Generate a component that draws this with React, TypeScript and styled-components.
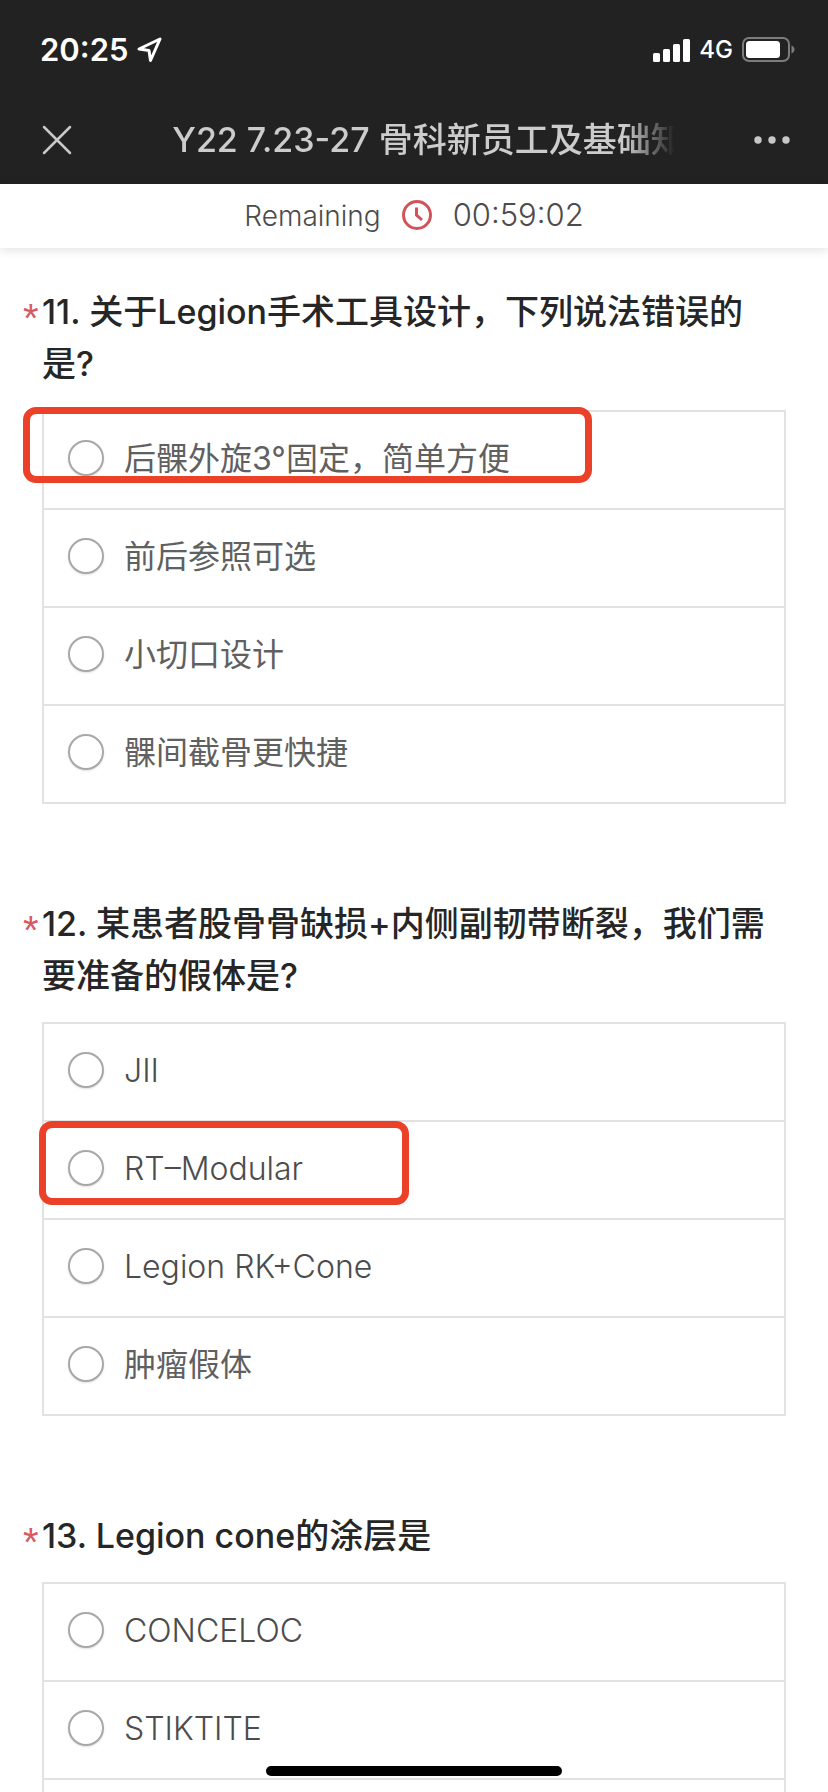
import React, { useState } from "react";
import styled, { createGlobalStyle } from "styled-components";

const GlobalStyle = createGlobalStyle`
  *, *::before, *::after { box-sizing: border-box; }
  body {
    margin: 0;
    background: #fff;
    font-family: Inter, "Noto Sans CJK SC", sans-serif;
  }
`;

const Page = styled.div`
  display: flex;
  flex-direction: column;
  height: 100vh;
  overflow: hidden;
`;

const TopArea = styled.header`
  flex: none;
  background: #222;
`;

const StatusBar = styled.div`
  display: flex;
  align-items: center;
  justify-content: space-between;
  height: 96px;
  padding: 4px 33px 0 40px;
  color: #fff;
`;

const StatusGroup = styled.div`
  display: flex;
  align-items: center;
  gap: 9px;
`;

const StatusTime = styled.span`
  font-size: 31px;
  font-weight: 600;
  line-height: 40px;
`;

const Network = styled.span`
  font-size: 24px;
  font-weight: 500;
  line-height: 32px;
`;

const NavBar = styled.div`
  display: flex;
  align-items: center;
  justify-content: space-between;
  height: 88px;
  padding: 0 36px 0 37px;
`;

const IconButton = styled.button`
  display: flex;
  align-items: center;
  justify-content: center;
  flex: none;
  width: 40px;
  height: 40px;
  padding: 0;
  border: 0;
  background: none;
  color: #c8c8c8;
`;

const NavTitle = styled.h1`
  margin: 0 0 0 28px;
  white-space: nowrap;
  font-size: 34px;
  font-weight: 500;
  line-height: 48px;
  color: #ccc;
  mask-image: linear-gradient(to right, #000 calc(100% - 60px), transparent calc(100% - 10px));
`;

const TimerBar = styled.div`
  position: relative;
  display: flex;
  align-items: center;
  justify-content: center;
  gap: 20px;
  flex: none;
  height: 64px;
  padding: 0 0 2px;
  color: #4c4c4c;
  background: #fff;
  box-shadow: 0 2px 10px rgba(0, 0, 0, 0.12);
`;

const TimerLabel = styled.span`
  padding-top: 2px;
  font-size: 28px;
  font-weight: 300;
  line-height: 40px;
`;

const TimerValue = styled.time`
  font-size: 31px;
  font-weight: 300;
  line-height: 40px;
`;

const Content = styled.main`
  display: flex;
  flex-direction: column;
  gap: 94px;
  flex: 1;
  min-height: 0;
  padding: 38px 42px 0 23px;
  overflow-y: auto;
  scrollbar-width: none;
`;

const QuestionBlock = styled.section`
  flex: none;
`;

const QuestionTitle = styled.h2`
  display: flex;
  margin: 0 0 20px;
  font-size: 34px;
  font-weight: 500;
  line-height: 52px;
  color: #262626;
`;

const Required = styled.span`
  flex: none;
  width: 19px;
  height: 52px;
  font-family: "Liberation Sans", sans-serif;
  font-size: 40px;
  font-weight: 400;
  line-height: 64px;
  color: #d9595f;
`;

const OptionList = styled.div`
  margin-left: 19px;
  border: 2px solid #e2e2e2;
  border-bottom: 0;
`;

const OptionRow = styled.label`
  position: relative;
  display: flex;
  align-items: center;
  gap: 20px;
  height: 98px;
  padding: 0 24px 4px;
  border-bottom: 2px solid #e2e2e2;
`;

const OptionText = styled.span<{ $latin: boolean }>`
  padding-top: 2px;
  font-size: 32px;
  font-weight: ${(p) => (p.$latin ? 300 : 400)};
  line-height: 48px;
  color: ${(p) => (p.$latin ? "#4c4c4c" : "#606060")};
`;

const Radio = styled.input`
  appearance: none;
  flex: none;
  width: 36px;
  height: 36px;
  margin: 0;
  border: 2px solid #a8a8a8;
  border-radius: 50%;
  background: #fff;
  box-shadow: 0 1px 2px rgba(0, 0, 0, 0.12);

  &:checked {
    border-width: 10px;
  }
`;

const Mark = styled.span<{ $x: number; $y: number; $w: number; $h: number }>`
  position: absolute;
  z-index: 1;
  left: ${(p) => p.$x}px;
  top: ${(p) => p.$y}px;
  width: ${(p) => p.$w}px;
  height: ${(p) => p.$h}px;
  border: 7px solid #eb4128;
  border-radius: 13px;
  pointer-events: none;
`;

const HomeIndicator = styled.div`
  position: fixed;
  bottom: 16px;
  left: 50%;
  z-index: 2;
  width: 296px;
  height: 10px;
  border-radius: 5px;
  background: #000;
  transform: translateX(-50%);
`;

type Option = {
  text: string;
  latin?: boolean;
  mark?: { x: number; y: number; w: number; h: number };
};
type Question = { id: number; title: string; options: Option[]; more?: boolean };

const questions: Question[] = [
  {
    id: 11,
    title: "关于Legion手术工具设计，下列说法错误的是?",
    options: [
      { text: "后髁外旋3°固定，简单方便", mark: { x: -21, y: -5, w: 569, h: 76 } },
      { text: "前后参照可选" },
      { text: "小切口设计" },
      { text: "髁间截骨更快捷" },
    ],
  },
  {
    id: 12,
    title: "某患者股骨骨缺损+内侧副韧带断裂，我们需要准备的假体是?",
    options: [
      { text: "JII", latin: true },
      { text: "RT–Modular", latin: true, mark: { x: -5, y: -1, w: 370, h: 84 } },
      { text: "Legion RK+Cone", latin: true },
      { text: "肿瘤假体" },
    ],
  },
  {
    id: 13,
    title: "Legion cone的涂层是",
    options: [
      { text: "CONCELOC", latin: true },
      { text: "STIKTITE", latin: true },
    ],
    more: true,
  },
];

const LocationIcon = () => (
  <svg width="26" height="26" viewBox="0 0 26 26" fill="none" stroke="currentColor" strokeWidth="3" strokeLinejoin="round" aria-hidden="true">
    <path d="M2 12 23 2 13.5 23.5 12 13.5Z" />
  </svg>
);

const SignalIcon = () => (
  <svg width="37" height="23" viewBox="0 0 37 23" fill="currentColor" aria-hidden="true">
    <rect x="0" y="14" width="7" height="9" rx="1.5" />
    <rect x="10" y="10" width="7" height="13" rx="1.5" />
    <rect x="20" y="5" width="7" height="18" rx="1.5" />
    <rect x="30" y="0" width="7" height="23" rx="1.5" />
  </svg>
);

const BatteryIcon = () => (
  <svg width="53" height="26" viewBox="0 0 53 26" aria-hidden="true">
    <rect x="1" y="1" width="46" height="23" rx="6" fill="none" stroke="#7c7c7c" strokeWidth="2" />
    <rect x="4" y="4" width="34" height="17" rx="3.5" fill="#fff" />
    <path d="M49.5 8.5c4 1.500 4 6.500 0 8z" fill="#7c7c7c" />
  </svg>
);

const CloseIcon = () => (
  <svg width="30" height="30" viewBox="0 0 30 30" stroke="currentColor" strokeWidth="2.500" strokeLinecap="round" aria-hidden="true">
    <path d="M2 2 28 28M28 2 2 28" />
  </svg>
);

const MoreIcon = () => (
  <svg width="36" height="8" viewBox="0 0 36 8" fill="currentColor" aria-hidden="true">
    <circle cx="4" cy="4" r="3.700" />
    <circle cx="18" cy="4" r="3.700" />
    <circle cx="32" cy="4" r="3.700" />
  </svg>
);

const ClockIcon = () => (
  <svg width="32" height="32" viewBox="0 0 32 32" fill="none" stroke="#d2525a" strokeWidth="3" aria-hidden="true">
    <circle cx="16" cy="16" r="13.500" />
    <path d="M15.500 8.500v7.500l5.500 5" />
  </svg>
);

export default function App() {
  const [answers, setAnswers] = useState<Record<number, string>>({});

  return (
    <>
      <GlobalStyle />
      <Page>
        <TopArea>
          <StatusBar>
            <StatusGroup>
              <StatusTime>20:25</StatusTime>
              <LocationIcon />
            </StatusGroup>
            <StatusGroup>
              <SignalIcon />
              <Network>4G</Network>
              <BatteryIcon />
            </StatusGroup>
          </StatusBar>
          <NavBar>
            <IconButton type="button" aria-label="Close">
              <CloseIcon />
            </IconButton>
            <NavTitle>Y22 7.23-27 骨科新员工及基础知</NavTitle>
            <IconButton type="button" aria-label="More">
              <MoreIcon />
            </IconButton>
          </NavBar>
        </TopArea>
        <TimerBar>
          <TimerLabel>Remaining</TimerLabel>
          <ClockIcon />
          <TimerValue>00:59:02</TimerValue>
        </TimerBar>
        <Content>
          {questions.map((q) => (
            <QuestionBlock key={q.id}>
              <QuestionTitle id={`question-${q.id}`}>
                <Required>*</Required>
                <span>{`${q.id}. ${q.title}`}</span>
              </QuestionTitle>
              <OptionList role="radiogroup" aria-labelledby={`question-${q.id}`}>
                {q.options.map((o) => (
                  <OptionRow key={o.text}>
                    <Radio
                      type="radio"
                      name={`question-${q.id}`}
                      checked={answers[q.id] === o.text}
                      onChange={() => setAnswers({ ...answers, [q.id]: o.text })}
                    />
                    <OptionText $latin={!!o.latin}>{o.text}</OptionText>
                    {o.mark && <Mark $x={o.mark.x} $y={o.mark.y} $w={o.mark.w} $h={o.mark.h} />}
                  </OptionRow>
                ))}
                {q.more && <OptionRow as="div" />}
              </OptionList>
            </QuestionBlock>
          ))}
        </Content>
        <HomeIndicator />
      </Page>
    </>
  );
}
